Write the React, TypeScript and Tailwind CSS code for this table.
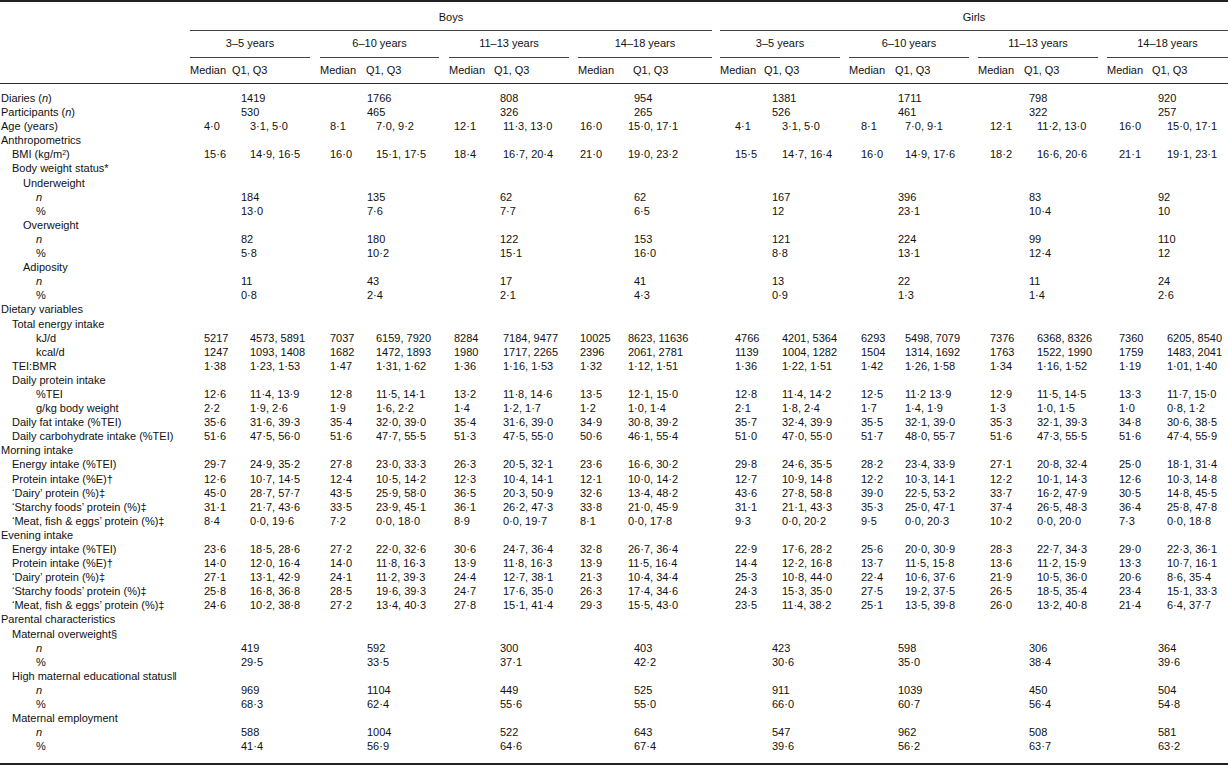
import React from 'react';

type Row =
    | { label: React.ReactNode; pad: string; kind: 'section' }
    | { label: React.ReactNode; pad: string; kind: 'count'; vals: string[] }
    | { label: React.ReactNode; pad: string; kind: 'stat'; vals: [string, string][] };

// column offsets per age group, read off the printed table
const groups = [
    { gap: 'pr-[10px]', med: 'w-[60px] pl-[14px]', cnt: 'pl-[51px]', hdr: 'w-[42px]', title: '3–5 years' },
    { gap: 'pr-[10px]', med: 'w-[56px] pl-[10px]', cnt: 'pl-[47px]', hdr: 'w-[46px]', title: '6–10 years' },
    { gap: 'pr-[9px]', med: 'w-[54px] pl-[5px]', cnt: 'pl-[51px]', hdr: 'w-[45px]', title: '11–13 years' },
    { gap: 'pr-[8px]', med: 'w-[50px] pl-[2px]', cnt: 'pl-[56px]', hdr: 'w-[55px]', title: '14–18 years' },
    { gap: 'pr-[9px]', med: 'w-[62px] pl-[15px]', cnt: 'pl-[52px]', hdr: 'w-[44px]', title: '3–5 years' },
    { gap: 'pr-[9px]', med: 'w-[56px] pl-[12px]', cnt: 'pl-[49px]', hdr: 'w-[46px]', title: '6–10 years' },
    { gap: 'pr-[9px]', med: 'w-[59px] pl-[12px]', cnt: 'pl-[51px]', hdr: 'w-[46px]', title: '11–13 years' },
    { gap: '', med: 'w-[60px] pl-[12px]', cnt: 'pl-[51px]', hdr: 'w-[45px]', title: '14–18 years' },
];

const L0 = 'pl-[1px]';
const L1 = 'pl-[12px]';
const L2 = 'pl-[23px]';
const L3 = 'pl-[36px]';

const n = <i>n</i>;

function s(str: string): [string, string][] {
    // "4·0|3·1, 5·0;8·1|7·0, 9·2;..."
    return str.split(';').map((p) => p.split('|') as [string, string]);
}

const rows: Row[] = [
    { label: <>Diaries ({n})</>, pad: L0, kind: 'count', vals: ['1419', '1766', '808', '954', '1381', '1711', '798', '920'] },
    { label: <>Participants ({n})</>, pad: L0, kind: 'count', vals: ['530', '465', '326', '265', '526', '461', '322', '257'] },
    { label: 'Age (years)', pad: L0, kind: 'stat', vals: s('4·0|3·1, 5·0;8·1|7·0, 9·2;12·1|11·3, 13·0;16·0|15·0, 17·1;4·1|3·1, 5·0;8·1|7·0, 9·1;12·1|11·2, 13·0;16·0|15·0, 17·1') },
    { label: 'Anthropometrics', pad: L0, kind: 'section' },
    {
        label: (
            <>
                BMI (kg/m<sup className="text-[7px]">2</sup>)
            </>
        ),
        pad: L1,
        kind: 'stat',
        vals: s('15·6|14·9, 16·5;16·0|15·1, 17·5;18·4|16·7, 20·4;21·0|19·0, 23·2;15·5|14·7, 16·4;16·0|14·9, 17·6;18·2|16·6, 20·6;21·1|19·1, 23·1'),
    },
    { label: 'Body weight status*', pad: L1, kind: 'section' },
    { label: 'Underweight', pad: L2, kind: 'section' },
    { label: n, pad: L3, kind: 'count', vals: ['184', '135', '62', '62', '167', '396', '83', '92'] },
    { label: '%', pad: L3, kind: 'count', vals: ['13·0', '7·6', '7·7', '6·5', '12', '23·1', '10·4', '10'] },
    { label: 'Overweight', pad: L2, kind: 'section' },
    { label: n, pad: L3, kind: 'count', vals: ['82', '180', '122', '153', '121', '224', '99', '110'] },
    { label: '%', pad: L3, kind: 'count', vals: ['5·8', '10·2', '15·1', '16·0', '8·8', '13·1', '12·4', '12'] },
    { label: 'Adiposity', pad: L2, kind: 'section' },
    { label: n, pad: L3, kind: 'count', vals: ['11', '43', '17', '41', '13', '22', '11', '24'] },
    { label: '%', pad: L3, kind: 'count', vals: ['0·8', '2·4', '2·1', '4·3', '0·9', '1·3', '1·4', '2·6'] },
    { label: 'Dietary variables', pad: L0, kind: 'section' },
    { label: 'Total energy intake', pad: L1, kind: 'section' },
    { label: 'kJ/d', pad: L3, kind: 'stat', vals: s('5217|4573, 5891;7037|6159, 7920;8284|7184, 9477;10025|8623, 11636;4766|4201, 5364;6293|5498, 7079;7376|6368, 8326;7360|6205, 8540') },
    { label: 'kcal/d', pad: L3, kind: 'stat', vals: s('1247|1093, 1408;1682|1472, 1893;1980|1717, 2265;2396|2061, 2781;1139|1004, 1282;1504|1314, 1692;1763|1522, 1990;1759|1483, 2041') },
    { label: 'TEI:BMR', pad: L1, kind: 'stat', vals: s('1·38|1·23, 1·53;1·47|1·31, 1·62;1·36|1·16, 1·53;1·32|1·12, 1·51;1·36|1·22, 1·51;1·42|1·26, 1·58;1·34|1·16, 1·52;1·19|1·01, 1·40') },
    { label: 'Daily protein intake', pad: L1, kind: 'section' },
    { label: '%TEI', pad: L3, kind: 'stat', vals: s('12·6|11·4, 13·9;12·8|11·5, 14·1;13·2|11·8, 14·6;13·5|12·1, 15·0;12·8|11·4, 14·2;12·5|11·2 13·9;12·9|11·5, 14·5;13·3|11·7, 15·0') },
    { label: 'g/kg body weight', pad: L3, kind: 'stat', vals: s('2·2|1·9, 2·6;1·9|1·6, 2·2;1·4|1·2, 1·7;1·2|1·0, 1·4;2·1|1·8, 2·4;1·7|1·4, 1·9;1·3|1·0, 1·5;1·0|0·8, 1·2') },
    { label: 'Daily fat intake (%TEI)', pad: L1, kind: 'stat', vals: s('35·6|31·6, 39·3;35·4|32·0, 39·0;35·4|31·6, 39·0;34·9|30·8, 39·2;35·7|32·4, 39·9;35·5|32·1, 39·0;35·3|32·1, 39·3;34·8|30·6, 38·5') },
    { label: 'Daily carbohydrate intake (%TEI)', pad: L1, kind: 'stat', vals: s('51·6|47·5, 56·0;51·6|47·7, 55·5;51·3|47·5, 55·0;50·6|46·1, 55·4;51·0|47·0, 55·0;51·7|48·0, 55·7;51·6|47·3, 55·5;51·6|47·4, 55·9') },
    { label: 'Morning intake', pad: L0, kind: 'section' },
    { label: 'Energy intake (%TEI)', pad: L1, kind: 'stat', vals: s('29·7|24·9, 35·2;27·8|23·0, 33·3;26·3|20·5, 32·1;23·6|16·6, 30·2;29·8|24·6, 35·5;28·2|23·4, 33·9;27·1|20·8, 32·4;25·0|18·1, 31·4') },
    { label: 'Protein intake (%E)†', pad: L1, kind: 'stat', vals: s('12·6|10·7, 14·5;12·4|10·5, 14·2;12·3|10·4, 14·1;12·1|10·0, 14·2;12·7|10·9, 14·8;12·2|10·3, 14·1;12·2|10·1, 14·3;12·6|10·3, 14·8') },
    { label: '‘Dairy’ protein (%)‡', pad: L1, kind: 'stat', vals: s('45·0|28·7, 57·7;43·5|25·9, 58·0;36·5|20·3, 50·9;32·6|13·4, 48·2;43·6|27·8, 58·8;39·0|22·5, 53·2;33·7|16·2, 47·9;30·5|14·8, 45·5') },
    { label: '‘Starchy foods’ protein (%)‡', pad: L1, kind: 'stat', vals: s('31·1|21·7, 43·6;33·5|23·9, 45·1;36·1|26·2, 47·3;33·8|21·0, 45·9;31·1|21·1, 43·3;35·3|25·0, 47·1;37·4|26·5, 48·3;36·4|25·8, 47·8') },
    { label: '‘Meat, fish & eggs’ protein (%)‡', pad: L1, kind: 'stat', vals: s('8·4|0·0, 19·6;7·2|0·0, 18·0;8·9|0·0, 19·7;8·1|0·0, 17·8;9·3|0·0, 20·2;9·5|0·0, 20·3;10·2|0·0, 20·0;7·3|0·0, 18·8') },
    { label: 'Evening intake', pad: L0, kind: 'section' },
    { label: 'Energy intake (%TEI)', pad: L1, kind: 'stat', vals: s('23·6|18·5, 28·6;27·2|22·0, 32·6;30·6|24·7, 36·4;32·8|26·7, 36·4;22·9|17·6, 28·2;25·6|20·0, 30·9;28·3|22·7, 34·3;29·0|22·3, 36·1') },
    { label: 'Protein intake (%E)†', pad: L1, kind: 'stat', vals: s('14·0|12·0, 16·4;14·0|11·8, 16·3;13·9|11·8, 16·3;13·9|11·5, 16·4;14·4|12·2, 16·8;13·7|11·5, 15·8;13·6|11·2, 15·9;13·3|10·7, 16·1') },
    { label: '‘Dairy’ protein (%)‡', pad: L1, kind: 'stat', vals: s('27·1|13·1, 42·9;24·1|11·2, 39·3;24·4|12·7, 38·1;21·3|10·4, 34·4;25·3|10·8, 44·0;22·4|10·6, 37·6;21·9|10·5, 36·0;20·6|8·6, 35·4') },
    { label: '‘Starchy foods’ protein (%)‡', pad: L1, kind: 'stat', vals: s('25·8|16·8, 36·8;28·5|19·6, 39·3;24·7|17·6, 35·0;26·3|17·4, 34·6;24·3|15·3, 35·0;27·5|19·2, 37·5;26·5|18·5, 35·4;23·4|15·1, 33·3') },
    { label: '‘Meat, fish & eggs’ protein (%)‡', pad: L1, kind: 'stat', vals: s('24·6|10·2, 38·8;27·2|13·4, 40·3;27·8|15·1, 41·4;29·3|15·5, 43·0;23·5|11·4, 38·2;25·1|13·5, 39·8;26·0|13·2, 40·8;21·4|6·4, 37·7') },
    { label: 'Parental characteristics', pad: L0, kind: 'section' },
    { label: 'Maternal overweight§', pad: L1, kind: 'section' },
    { label: n, pad: L3, kind: 'count', vals: ['419', '592', '300', '403', '423', '598', '306', '364'] },
    { label: '%', pad: L3, kind: 'count', vals: ['29·5', '33·5', '37·1', '42·2', '30·6', '35·0', '38·4', '39·6'] },
    { label: 'High maternal educational status‖', pad: L1, kind: 'section' },
    { label: n, pad: L3, kind: 'count', vals: ['969', '1104', '449', '525', '911', '1039', '450', '504'] },
    { label: '%', pad: L3, kind: 'count', vals: ['68·3', '62·4', '55·6', '55·0', '66·0', '60·7', '56·4', '54·8'] },
    { label: 'Maternal employment', pad: L1, kind: 'section' },
    { label: n, pad: L3, kind: 'count', vals: ['588', '1004', '522', '643', '547', '962', '508', '581'] },
    { label: '%', pad: L3, kind: 'count', vals: ['41·4', '56·9', '64·6', '67·4', '39·6', '56·2', '63·7', '63·2'] },
];

const cols = 'grid grid-cols-[190px_130px_129px_129px_142px_129px_129px_129px_121px]';

function BodyRow({ row }: { row: Row }) {
    return (
        <div className={`${cols} h-[14.1px] leading-[14.1px]`}>
            <div className={`${row.pad} whitespace-nowrap`}>{row.label}</div>
            {row.kind === 'section' && <div className="col-span-8" />}
            {row.kind === 'count' &&
                row.vals.map((v, i) => (
                    <div key={i} className={`${groups[i].cnt} whitespace-nowrap`}>
                        {v}
                    </div>
                ))}
            {row.kind === 'stat' &&
                row.vals.map(([m, q], i) => (
                    <div key={i} className="flex whitespace-nowrap">
                        <span className={`${groups[i].med} shrink-0`}>{m}</span>
                        <span>{q}</span>
                    </div>
                ))}
        </div>
    );
}

export default function App() {
    return (
        <div className="h-[766px] w-[1228px] overflow-hidden bg-white font-['Liberation_Sans',Arial,sans-serif] text-[11px] text-[#111111]">
            <div className="border-t-2 border-b-2 border-[#222222]">
                {/* Sex header */}
                <div className={cols}>
                    <div />
                    <div className="col-span-4 pr-[8px]">
                        <div className="border-b border-[#444444] pt-[8px] pb-[6px] text-center leading-[14px]">Boys</div>
                    </div>
                    <div className="col-span-4">
                        <div className="border-b border-[#444444] pt-[8px] pb-[6px] text-center leading-[14px]">Girls</div>
                    </div>
                </div>

                {/* Age groups */}
                <div className={cols}>
                    <div />
                    {groups.map((g, i) => (
                        <div key={i} className={g.gap}>
                            <div className="border-b border-[#444444] pt-[5px] pb-[7px] text-center leading-[14px] whitespace-nowrap">
                                {g.title}
                            </div>
                        </div>
                    ))}
                </div>

                {/* Median / Q1, Q3 */}
                <div className={`${cols} border-b border-[#2b2b2b]`}>
                    <div />
                    {groups.map((g, i) => (
                        <div key={i} className="flex pt-[5px] pb-[6px] leading-[14px] whitespace-nowrap">
                            <span className={`${g.hdr} shrink-0`}>Median</span>
                            <span>Q1, Q3</span>
                        </div>
                    ))}
                </div>

                {/* Body */}
                <div className="pt-[7px] pb-[10px]">
                    {rows.map((r, i) => (
                        <BodyRow key={i} row={r} />
                    ))}
                </div>
            </div>
        </div>
    );
}
